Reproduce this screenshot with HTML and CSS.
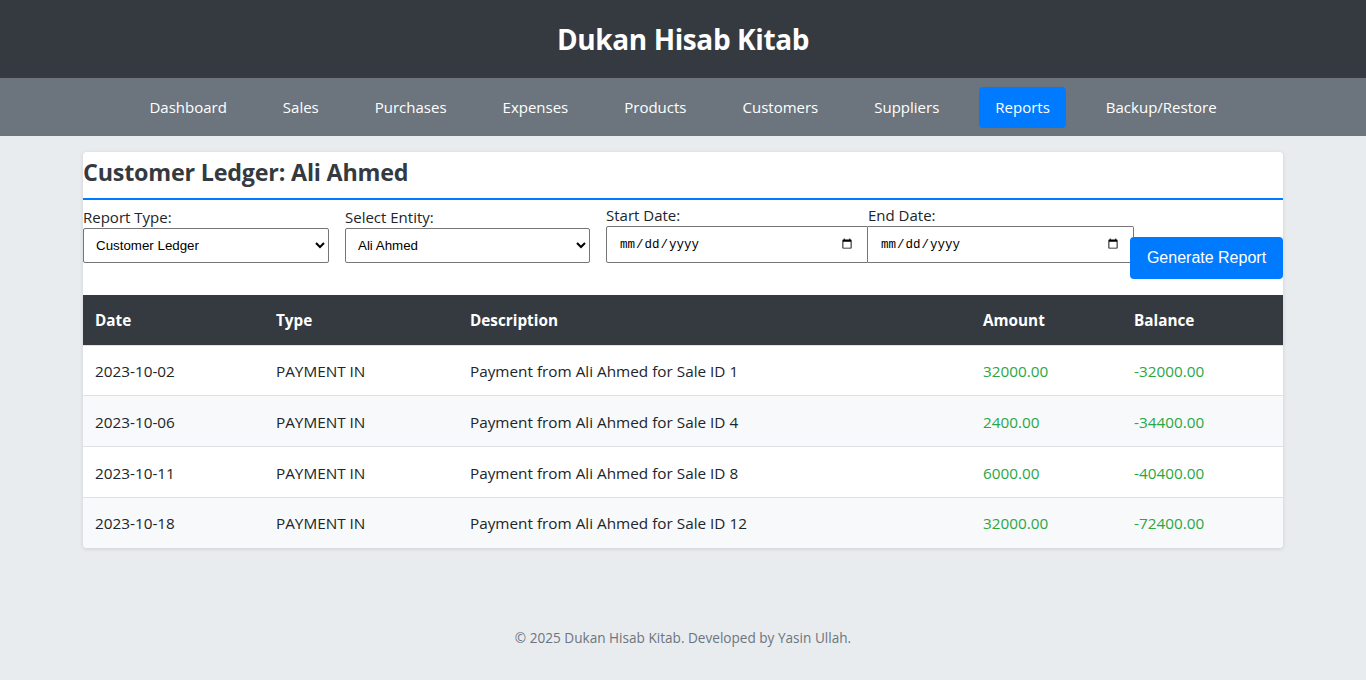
FILE: index.html
```html
<!DOCTYPE html>
<html lang="en">
<head>
<meta charset="utf-8">
<title>Dukan Hisab Kitab</title>
<link rel="stylesheet" href="styles.css">
</head>
<body>
<header class="site-header">
  <h1 class="site-title">Dukan Hisab Kitab</h1>
</header>
<nav class="main-nav">
  <a href="#" class="nav-link">Dashboard</a>
  <a href="#" class="nav-link">Sales</a>
  <a href="#" class="nav-link">Purchases</a>
  <a href="#" class="nav-link">Expenses</a>
  <a href="#" class="nav-link">Products</a>
  <a href="#" class="nav-link">Customers</a>
  <a href="#" class="nav-link">Suppliers</a>
  <a href="#" class="nav-link active">Reports</a>
  <a href="#" class="nav-link">Backup/Restore</a>
</nav>
<main class="container">
  <section class="card">
    <h2 class="card-title">Customer Ledger: Ali Ahmed</h2>
    <form class="report-form">
      <div class="form-group g-type">
        <label class="form-label">Report Type:</label>
        <select class="form-select">
          <option>Customer Ledger</option>
        </select>
      </div>
      <div class="form-group g-entity">
        <label class="form-label">Select Entity:</label>
        <select class="form-select">
          <option>Ali Ahmed</option>
        </select>
      </div>
      <div class="form-group g-date">
        <label class="form-label">Start Date:</label>
        <input type="date" class="form-date">
      </div>
      <div class="form-group g-date g-end">
        <label class="form-label">End Date:</label>
        <input type="date" class="form-date">
      </div>
      <button type="button" class="btn-generate">Generate Report</button>
    </form>
    <table class="ledger">
      <thead>
        <tr>
          <th class="c-date">Date</th>
          <th class="c-type">Type</th>
          <th class="c-desc">Description</th>
          <th class="c-amt">Amount</th>
          <th class="c-bal">Balance</th>
        </tr>
      </thead>
      <tbody>
        <tr>
          <td>2023-10-02</td><td>PAYMENT IN</td><td>Payment from Ali Ahmed for Sale ID 1</td>
          <td class="pos">32000.00</td><td class="pos">-32000.00</td>
        </tr>
        <tr class="tall">
          <td>2023-10-06</td><td>PAYMENT IN</td><td>Payment from Ali Ahmed for Sale ID 4</td>
          <td class="pos">2400.00</td><td class="pos">-34400.00</td>
        </tr>
        <tr class="tall">
          <td>2023-10-11</td><td>PAYMENT IN</td><td>Payment from Ali Ahmed for Sale ID 8</td>
          <td class="pos">6000.00</td><td class="pos">-40400.00</td>
        </tr>
        <tr>
          <td>2023-10-18</td><td>PAYMENT IN</td><td>Payment from Ali Ahmed for Sale ID 12</td>
          <td class="pos">32000.00</td><td class="pos">-72400.00</td>
        </tr>
      </tbody>
    </table>
  </section>
</main>
<footer class="site-footer">
  <p class="footer-text">© 2025 Dukan Hisab Kitab. Developed by Yasin Ullah.</p>
</footer>
</body>
</html>
```

FILE: styles.css
```css
* { box-sizing: border-box; }

html, body {
  margin: 0;
  padding: 0;
}

body {
  background: #e9ecef;
  font-family: "Segoe UI", "Open Sans", "Noto Sans", sans-serif;
  color: #212529;
  font-size: 16px;
}

.site-header {
  background: #343a40;
  height: 78px;
  display: flex;
  align-items: center;
  justify-content: center;
}

.site-title {
  margin: 0;
  color: #fff;
  font-size: 28px;
  font-weight: 700;
  line-height: 34px;
  letter-spacing: -0.4px;
}

.main-nav {
  background: #6c757d;
  height: 58px;
  display: flex;
  justify-content: center;
  align-items: center;
  gap: 24px;
  padding-top: 1px;
}

.nav-link {
  color: #fff;
  text-decoration: none;
  font-size: 15px;
  padding: 8px 16px;
  line-height: 25px;
  border-radius: 4px;
}

.nav-link.active {
  background: #007bff;
}

.container {
  width: 1200px;
  margin: 16px auto 0;
}

.card {
  background: #fff;
  border-radius: 4px;
  box-shadow: 0 1px 4px rgba(0, 0, 0, 0.12);
  overflow: hidden;
}

.card-title {
  margin: 0;
  font-size: 23.3px;
  font-weight: 700;
  color: #343a40;
  line-height: 30px;
  padding: 5px 0 11px;
  border-bottom: 2px solid #007bff;
  letter-spacing: -0.2px;
}

.report-form {
  display: flex;
  align-items: flex-start;
  padding-top: 5px;
}

.form-group {
  display: flex;
  flex-direction: column;
}

.g-type { width: 246px; margin-right: 16px; padding-top: 2px; }
.g-entity { width: 245px; margin-right: 16px; padding-top: 2px; }
.g-date { width: 262px; }

.form-label {
  font-size: 15px;
  line-height: 21px;
  color: #212529;
}

.form-select {
  height: 35px;
  width: 100%;
  border: 1px solid #767676;
  border-radius: 2px;
  background: #fff;
  font-family: "Liberation Sans", Arial, sans-serif;
  font-size: 13.33px;
  color: #000;
  padding: 0 8px;
}

.form-date {
  height: 37px;
  width: 100%;
  border: 1px solid #767676;
  border-radius: 2px 0 0 2px;
  font-family: "Liberation Mono", monospace;
  font-size: 12.5px;
  color: #000;
  padding: 0 12px;
}

.g-end .form-date {
  width: 266px;
  border-left: none;
  border-radius: 0 2px 2px 0;
}

.btn-generate {
  position: relative;
  z-index: 1;
  width: 153px;
  height: 42px;
  margin-top: 32px;
  background: #007bff;
  color: #fff;
  border: none;
  border-radius: 4px;
  font-family: "Liberation Sans", Arial, sans-serif;
  font-size: 16px;
  padding: 0;
}

.ledger {
  width: 100%;
  margin-top: 16px;
  border-collapse: collapse;
  font-size: 15.3px;
}

.ledger th {
  background: #343a40;
  color: #fff;
  font-weight: 700;
  text-align: left;
  padding: 13px 12px;
  line-height: 24px;
  height: 50px;
}

.ledger td {
  padding: 13px 12px 12px;
  line-height: 24px;
  border-top: 1px solid #dee2e6;
  height: 50px;
  color: #212529;
}

.ledger tr.tall td {
  height: 51px;
}

.ledger tbody tr:nth-child(even) td {
  background: #f8f9fa;
}

.c-date { width: 181px; }
.c-type { width: 194px; }
.c-desc { width: 513px; }
.c-amt { width: 151px; }
.c-bal { width: 161px; }

.ledger td.pos {
  color: #28a745;
}

.site-footer {
  margin-top: 80px;
  text-align: center;
}

.footer-text {
  margin: 0;
  font-size: 13.6px;
  color: #6c757d;
  line-height: 20px;
}
```
